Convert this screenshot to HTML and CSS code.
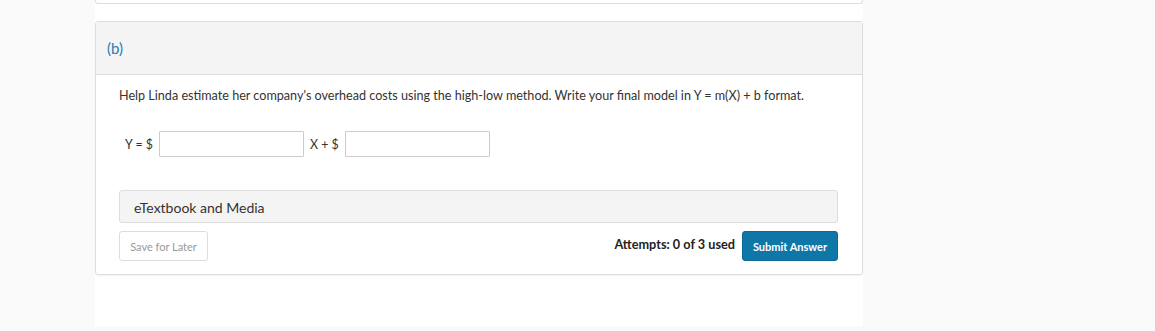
FILE: index.html
```html
<!DOCTYPE html>
<html lang="en">
<head>
    <meta charset="UTF-8">
    <meta name="viewport" content="width=device-width, initial-scale=1.0">
    <title>Question Part (b)</title>
    <link rel="stylesheet" href="styles.css">
</head>
<body>
    <div class="page">
        <div class="prev-card"></div>

        <div class="card">
            <div class="card-head">(b)</div>
            <div class="card-body">
                <p class="prompt">Help Linda estimate her company's overhead costs using the high-low method. Write your final model in Y = m(X) + b format.</p>

                <div class="answer-row">
                    <span class="label">Y = $</span>
                    <input type="text" class="answer">
                    <span class="label">X + $</span>
                    <input type="text" class="answer">
                </div>

                <div class="media-bar">eTextbook and Media</div>

                <div class="actions">
                    <button class="btn-save">Save for Later</button>
                    <div class="submit-group">
                        <span class="attempts">Attempts: 0 of 3 used</span>
                        <button class="btn-submit">Submit Answer</button>
                    </div>
                </div>
            </div>
        </div>
    </div>
</body>
</html>
```

FILE: styles.css
```css
body { margin: 0; background: #fafafa; font-family: Lato, "Liberation Sans", sans-serif; color: #333; }
.page { width: 768px; height: 326px; margin-left: 95px; background: #fff; }

.prev-card { height: 3px; border: 1px solid #ddd; border-top: none; border-radius: 0 0 3px 3px; }

.card { margin-top: 17px; border: 1px solid #ddd; border-radius: 3px; box-shadow: 0 1px 1px rgba(0, 0, 0, 0.05); }
.card-head { height: 52px; line-height: 52px; padding-left: 11px; background: #f4f4f4; border-bottom: 1px solid #ddd; color: #2a7bb0; font-size: 15px; }
.card-body { padding: 13px 24px 13px 23px; }

.prompt { margin: 0; font-size: 12.6px; line-height: 16px; }

.answer-row { display: flex; align-items: center; margin-top: 27px; padding-left: 6px; font-size: 12.4px; }
.label { margin-right: 6px; }
.answer { width: 145px; height: 26px; box-sizing: border-box; margin: 0 6px 0 0; border: 1px solid #ccc; border-radius: 1px; }

.media-bar { margin-top: 33px; height: 33px; line-height: 33px; box-sizing: border-box; padding-left: 14px; background: #f4f4f4; border: 1px solid #ddd; border-radius: 3px; font-size: 14px; }

.actions { display: flex; justify-content: space-between; align-items: center; margin-top: 8px; }
.btn-save { width: 89px; height: 30px; background: #fff; border: 1px solid #ddd; border-radius: 3px; color: #999; font-family: inherit; font-size: 11px; }
.submit-group { display: flex; align-items: center; gap: 7px; }
.attempts { font-size: 12.7px; font-weight: 700; color: #222; margin-top: -4px; }
.btn-submit { width: 96px; height: 30px; background: #0f77a7; border: 1px solid #0c6a96; border-radius: 3px; color: #fff; font-family: inherit; font-size: 11px; font-weight: 700; }
```
